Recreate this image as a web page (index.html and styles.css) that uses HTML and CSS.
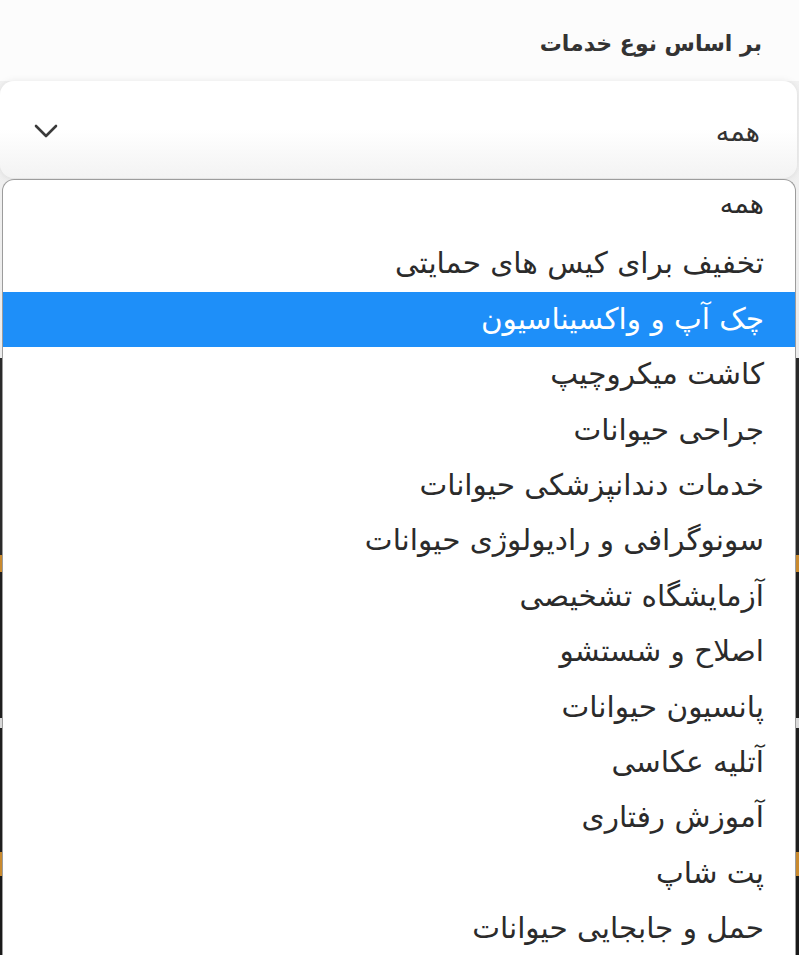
FILE: index.html
```html
<!DOCTYPE html>
<html lang="fa" dir="rtl">
<head>
<meta charset="utf-8">
<title>بر اساس نوع خدمات</title>
<link rel="stylesheet" href="styles.css">
</head>
<body>
<div class="page">
  <div class="label">بر اساس نوع خدمات</div>
  <div class="select">
    <span class="value">همه</span>
    <svg class="chev" width="26" height="16" viewBox="0 0 26 16"><path d="M3 3 L13 13 L23 3" fill="none" stroke="#3a3a3a" stroke-width="2.6" stroke-linecap="round" stroke-linejoin="round"/></svg>
  </div>
  <ul class="panel">
    <li class="opt first">همه</li>
    <li class="opt">تخفیف برای کیس های حمایتی</li>
    <li class="opt active">چک آپ و واکسیناسیون</li>
    <li class="opt">کاشت میکروچیپ</li>
    <li class="opt">جراحی حیوانات</li>
    <li class="opt">خدمات دندانپزشکی حیوانات</li>
    <li class="opt">سونوگرافی و رادیولوژی حیوانات</li>
    <li class="opt">آزمایشگاه تشخیصی</li>
    <li class="opt">اصلاح و شستشو</li>
    <li class="opt">پانسیون حیوانات</li>
    <li class="opt">آتلیه عکاسی</li>
    <li class="opt">آموزش رفتاری</li>
    <li class="opt">پت شاپ</li>
    <li class="opt">حمل و جابجایی حیوانات</li>
  </ul>
</div>
</body>
</html>
```

FILE: styles.css
```css
html, body {
  margin: 0;
  padding: 0;
  height: 955px;
  overflow: hidden;
}
body {
  font-family: "DejaVu Sans", "Noto Sans", sans-serif;
  color: #2e2e2e;
  background:
    linear-gradient(to bottom,
      #f3f3f3 0, #ececec 358px,
      #2a2a2a 358px, #2a2a2a 555px,
      #c98a2e 555px, #c98a2e 572px,
      #1f1f1f 572px, #1f1f1f 718px,
      #d8d8d8 718px, #d8d8d8 728px,
      #1f1f1f 728px, #1f1f1f 852px,
      #c98a2e 852px, #c98a2e 876px,
      #1a1a1a 876px);
}
.page {
  display: flex;
  flex-direction: column;
}
.label {
  background: #fcfcfc;
  padding: 29px 37px 0 0;
  height: 81px;
  box-sizing: border-box;
  font-size: 22px;
  font-weight: bold;
  color: #333;
  line-height: 30px;
}
.select {
  height: 97px;
  box-sizing: border-box;
  margin: 0 2px 0 0;
  background: linear-gradient(to bottom, #ffffff 0, #ffffff 50%, #f3f3f3 100%);
  border-radius: 14px;
  box-shadow: 0 -2px 6px rgba(0,0,0,0.04), 0 2px 6px rgba(0,0,0,0.06);
  display: flex;
  align-items: center;
  justify-content: space-between;
  padding: 0 37px 0 33px;
}
.select .value {
  font-size: 27px;
  color: #333;
  line-height: 30px;
  padding-top: 4px;
}
.chev {
  display: block;
  margin-top: 2px;
}
.panel {
  list-style: none;
  margin: 1px 3px 0 2px;
  padding: 1px 0 0 0;
  background: #ffffff;
  border: 1.5px solid #9c9c9c;
  border-bottom: none;
  border-radius: 12px 12px 0 0;
  height: 800px;
  box-sizing: border-box;
}
.opt {
  height: 55.4px;
  line-height: 55.4px;
  padding: 0 31px 0 10px;
  font-size: 29.5px;
  color: #2b2b2b;
  white-space: nowrap;
}
.opt.first {
  font-size: 27px;
  line-height: 46px;
}
.opt.active {
  background: #1e8ff9;
  color: #ffffff;
}
```
